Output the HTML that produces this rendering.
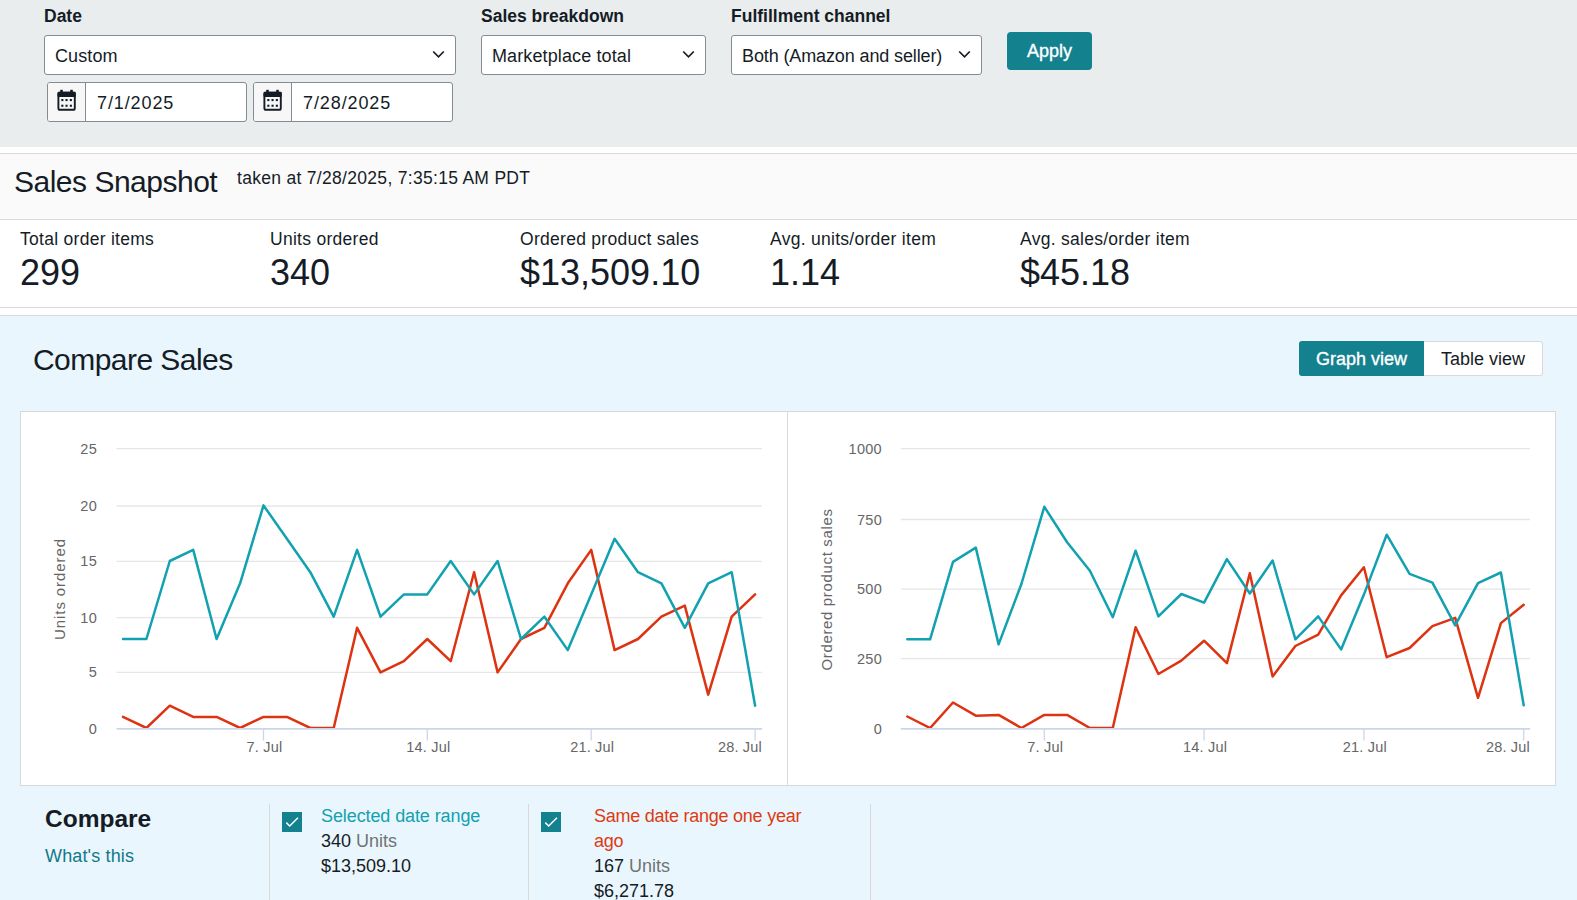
<!DOCTYPE html>
<html><head><meta charset="utf-8">
<style>
*{box-sizing:border-box;margin:0;padding:0}
html,body{width:1577px;height:900px;overflow:hidden;background:#fff}
body{font-family:"Liberation Sans",sans-serif;color:#151c26;position:relative}
.abs{position:absolute;white-space:nowrap}
#filters{position:absolute;left:0;top:0;width:1577px;height:147px;background:#eaeded}
.lbl{position:absolute;font-weight:bold;font-size:17.5px;color:#151c26;line-height:20px}
.sel{position:absolute;height:40px;background:#fff;border:1px solid #858b92;border-radius:3px}
.sel span{position:absolute;left:10px;top:9.5px;font-size:18px;line-height:20px;color:#151c26;letter-spacing:0.12px}
.chev{position:absolute;top:14px;width:13px;height:9px}
.dinp{position:absolute;top:82px;height:40px;width:200px;background:#fff;border:1px solid #858b92;border-radius:3px;overflow:hidden}
.dinp .ic{position:absolute;left:0;top:0;width:38px;height:38px;background:#f7f7f7;border-right:1px solid #858b92}
.dinp span{position:absolute;left:49px;top:10px;font-size:18px;line-height:20px;color:#151c26;letter-spacing:0.9px}
#apply{position:absolute;left:1007px;top:32px;width:85px;height:38px;background:#14818f;border-radius:4px;color:#fff;font-size:18px;line-height:38px;text-align:center;-webkit-text-stroke:0.35px #fff}
#snaphdr{position:absolute;left:0;top:153px;width:1577px;height:67px;background:#fafafa;border-top:1px solid #d9d9d9;border-bottom:1px solid #d9d9d9}
#metrics{position:absolute;left:0;top:220px;width:1577px;height:88px;border-bottom:1px solid #d9d9d9;background:#fff}
.mlab{position:absolute;top:9px;font-size:17.5px;line-height:20px;color:#151c26;letter-spacing:0.28px}
.mval{position:absolute;top:33px;font-size:36px;line-height:40px;color:#151c26}
#compare{position:absolute;left:0;top:315px;width:1577px;height:585px;background:#eaf6fd;border-top:1px solid #d9d9d9}
#toggle{position:absolute;left:1299px;top:341px;width:244px;height:35px}
#toggle .on{position:absolute;left:0;top:0;width:125px;height:35px;background:#14818f;color:#fff;font-size:18px;line-height:37px;text-align:center;border-radius:3px 0 0 3px;-webkit-text-stroke:0.35px #fff}
#toggle .off{position:absolute;left:125px;top:0;width:119px;height:35px;background:#fff;border:1px solid #d9d9d9;border-left:none;border-radius:0 3px 3px 0;color:#151c26;font-size:18px;line-height:35px;text-align:center}
#charts{position:absolute;left:20px;top:411px;width:1536px;height:375px;background:#fff;border:1px solid #d9d9d9}
#charts .div{position:absolute;left:766px;top:0;width:1px;height:373px;background:#d9d9d9}
.vdiv{position:absolute;top:804px;width:1px;height:96px;background:#d9d9d9}
.cb{position:absolute;top:812px;width:20px;height:20px;background:#14818f}
.leg{position:absolute;top:804px;font-size:18px;line-height:25px;color:#151c26;white-space:nowrap}
.gr{color:#6f7373}
.yl{font-size:14.5px;fill:#666;letter-spacing:0.3px}
.xl{font-size:14.5px;fill:#666;letter-spacing:0.2px}
.yt{font-size:15px;fill:#666;letter-spacing:0.9px}
</style></head>
<body>
<div id="filters">
  <div class="lbl" style="left:44px;top:6px">Date</div>
  <div class="sel" style="left:44px;top:35px;width:412px"><span>Custom</span>
    <svg class="chev" style="left:387px" viewBox="0 0 13 9"><path d="M1.2 1.5 L6.5 6.8 L11.8 1.5" fill="none" stroke="#151c26" stroke-width="1.7"/></svg></div>
  <div class="dinp" style="left:47px"><div class="ic"></div><span>7/1/2025</span></div>
  <div class="dinp" style="left:253px"><div class="ic"></div><span>7/28/2025</span></div>
  <div class="lbl" style="left:481px;top:6px">Sales breakdown</div>
  <div class="sel" style="left:481px;top:35px;width:225px"><span>Marketplace total</span>
    <svg class="chev" style="left:200px" viewBox="0 0 13 9"><path d="M1.2 1.5 L6.5 6.8 L11.8 1.5" fill="none" stroke="#151c26" stroke-width="1.7"/></svg></div>
  <div class="lbl" style="left:731px;top:6px">Fulfillment channel</div>
  <div class="sel" style="left:731px;top:35px;width:251px"><span style="letter-spacing:-0.12px">Both (Amazon and seller)</span>
    <svg class="chev" style="left:226px" viewBox="0 0 13 9"><path d="M1.2 1.5 L6.5 6.8 L11.8 1.5" fill="none" stroke="#151c26" stroke-width="1.7"/></svg></div>
  <div id="apply">Apply</div>
</div>

<div id="snaphdr">
  <div class="abs" style="left:14px;top:10px;font-size:30px;line-height:36px;letter-spacing:-0.5px">Sales Snapshot</div>
  <div class="abs" style="left:237px;top:14px;font-size:17.5px;line-height:20px;letter-spacing:0.3px">taken at 7/28/2025, 7:35:15 AM PDT</div>
</div>

<div id="metrics">
  <div class="mlab" style="left:20px">Total order items</div>
  <div class="mval" style="left:20px">299</div>
  <div class="mlab" style="left:270px">Units ordered</div>
  <div class="mval" style="left:270px">340</div>
  <div class="mlab" style="left:520px">Ordered product sales</div>
  <div class="mval" style="left:520px">$13,509.10</div>
  <div class="mlab" style="left:770px">Avg. units/order item</div>
  <div class="mval" style="left:770px">1.14</div>
  <div class="mlab" style="left:1020px">Avg. sales/order item</div>
  <div class="mval" style="left:1020px">$45.18</div>
</div>

<div id="compare"></div>
<div class="abs" style="left:33px;top:342px;font-size:30px;line-height:36px;letter-spacing:-0.55px">Compare Sales</div>
<div id="toggle"><div class="on">Graph view</div><div class="off">Table view</div></div>

<div id="charts"><div class="div"></div></div>

<!--CHART--><svg id="chartsvg" width="1577" height="900" viewBox="0 0 1577 900" style="position:absolute;left:0;top:0">
<clipPath id="clip123"><rect x="106.5" y="400" width="665.5" height="328.05"/></clipPath>
<line x1="116.5" y1="728.9" x2="762" y2="728.9" stroke="#ccd6eb" stroke-width="1.7"/>
<text x="97" y="733.7" text-anchor="end" class="yl">0</text>
<line x1="116.5" y1="672.4" x2="762" y2="672.4" stroke="#e6e6e6" stroke-width="1.3"/>
<text x="97" y="677.4" text-anchor="end" class="yl">5</text>
<line x1="116.5" y1="617.6" x2="762" y2="617.6" stroke="#e6e6e6" stroke-width="1.3"/>
<text x="97" y="622.6" text-anchor="end" class="yl">10</text>
<line x1="116.5" y1="561.4" x2="762" y2="561.4" stroke="#e6e6e6" stroke-width="1.3"/>
<text x="97" y="566.4" text-anchor="end" class="yl">15</text>
<line x1="116.5" y1="506.0" x2="762" y2="506.0" stroke="#e6e6e6" stroke-width="1.3"/>
<text x="97" y="511.0" text-anchor="end" class="yl">20</text>
<line x1="116.5" y1="448.7" x2="762" y2="448.7" stroke="#e6e6e6" stroke-width="1.3"/>
<text x="97" y="453.7" text-anchor="end" class="yl">25</text>
<line x1="263.5" y1="728.0" x2="263.5" y2="740.6" stroke="#ccd6eb" stroke-width="1.3"/>
<text x="264.5" y="752.0" text-anchor="middle" class="xl">7. Jul</text>
<line x1="427.3" y1="728.0" x2="427.3" y2="740.6" stroke="#ccd6eb" stroke-width="1.3"/>
<text x="428.3" y="752.0" text-anchor="middle" class="xl">14. Jul</text>
<line x1="591.2" y1="728.0" x2="591.2" y2="740.6" stroke="#ccd6eb" stroke-width="1.3"/>
<text x="592.2" y="752.0" text-anchor="middle" class="xl">21. Jul</text>
<line x1="755.1" y1="728.0" x2="755.1" y2="740.6" stroke="#ccd6eb" stroke-width="1.3"/>
<text x="762" y="752.0" text-anchor="end" class="xl">28. Jul</text>
<text x="64.5" y="589" text-anchor="middle" class="yt" style="letter-spacing:0.9px" transform="rotate(-90 64.5 589)">Units ordered</text>
<polyline clip-path="url(#clip123)" points="123.0,716.9 146.4,728.0 169.8,705.7 193.2,716.9 216.6,716.9 240.1,728.0 263.5,716.9 286.9,716.9 310.3,728.0 333.7,728.0 357.1,627.8 380.5,672.4 403.9,661.2 427.3,639.0 450.7,661.2 474.1,572.2 497.6,672.4 521.0,639.0 544.4,627.8 567.8,583.3 591.2,549.9 614.6,650.1 638.0,639.0 661.4,616.7 684.8,605.6 708.2,694.6 731.7,616.7 755.1,594.4" fill="none" stroke="#dd3311" stroke-width="2.5" stroke-linejoin="round" stroke-linecap="round"/>
<polyline clip-path="url(#clip123)" points="123.0,639.0 146.4,639.0 169.8,561.0 193.2,549.9 216.6,639.0 240.1,583.3 263.5,505.4 286.9,538.8 310.3,572.2 333.7,616.7 357.1,549.9 380.5,616.7 403.9,594.4 427.3,594.4 450.7,561.0 474.1,594.4 497.6,561.0 521.0,639.0 544.4,616.7 567.8,650.1 591.2,594.4 614.6,538.8 638.0,572.2 661.4,583.3 684.8,627.8 708.2,583.3 731.7,572.2 755.1,705.7" fill="none" stroke="#12a1b0" stroke-width="2.5" stroke-linejoin="round" stroke-linecap="round"/>
<clipPath id="clip907"><rect x="890.8" y="400" width="649.2" height="328.05"/></clipPath>
<line x1="900.8" y1="728.9" x2="1530" y2="728.9" stroke="#ccd6eb" stroke-width="1.7"/>
<text x="882" y="733.6" text-anchor="end" class="yl">0</text>
<line x1="900.8" y1="658.6" x2="1530" y2="658.6" stroke="#e6e6e6" stroke-width="1.3"/>
<text x="882" y="663.6" text-anchor="end" class="yl">250</text>
<line x1="900.8" y1="589.2" x2="1530" y2="589.2" stroke="#e6e6e6" stroke-width="1.3"/>
<text x="882" y="594.2" text-anchor="end" class="yl">500</text>
<line x1="900.8" y1="519.5" x2="1530" y2="519.5" stroke="#e6e6e6" stroke-width="1.3"/>
<text x="882" y="524.5" text-anchor="end" class="yl">750</text>
<line x1="900.8" y1="448.7" x2="1530" y2="448.7" stroke="#e6e6e6" stroke-width="1.3"/>
<text x="882" y="453.7" text-anchor="end" class="yl">1000</text>
<line x1="1044.3" y1="728.0" x2="1044.3" y2="740.6" stroke="#ccd6eb" stroke-width="1.3"/>
<text x="1045.3" y="752.0" text-anchor="middle" class="xl">7. Jul</text>
<line x1="1204.1" y1="728.0" x2="1204.1" y2="740.6" stroke="#ccd6eb" stroke-width="1.3"/>
<text x="1205.1" y="752.0" text-anchor="middle" class="xl">14. Jul</text>
<line x1="1363.9" y1="728.0" x2="1363.9" y2="740.6" stroke="#ccd6eb" stroke-width="1.3"/>
<text x="1364.9" y="752.0" text-anchor="middle" class="xl">21. Jul</text>
<line x1="1523.7" y1="728.0" x2="1523.7" y2="740.6" stroke="#ccd6eb" stroke-width="1.3"/>
<text x="1530" y="752.0" text-anchor="end" class="xl">28. Jul</text>
<text x="832" y="589.5" text-anchor="middle" class="yt" style="letter-spacing:0.65px" transform="rotate(-90 832 589.5)">Ordered product sales</text>
<polyline clip-path="url(#clip907)" points="907.3,716.5 930.1,728.0 953.0,702.5 975.8,715.7 998.6,714.9 1021.4,728.0 1044.3,714.9 1067.1,714.9 1089.9,728.0 1112.8,728.0 1135.6,627.3 1158.4,674.0 1181.3,660.6 1204.1,640.7 1226.9,663.1 1249.8,573.3 1272.6,676.5 1295.4,646.0 1318.2,634.6 1341.1,595.4 1363.9,567.2 1386.7,657.2 1409.6,648.0 1432.4,626.2 1455.2,617.8 1478.0,697.8 1500.9,623.1 1523.7,604.7" fill="none" stroke="#dd3311" stroke-width="2.5" stroke-linejoin="round" stroke-linecap="round"/>
<polyline clip-path="url(#clip907)" points="907.3,639.3 930.1,639.3 953.0,561.9 975.8,547.6 998.6,644.4 1021.4,584.0 1044.3,506.8 1067.1,542.3 1089.9,570.8 1112.8,617.2 1135.6,550.7 1158.4,616.4 1181.3,594.0 1204.1,602.7 1226.9,559.1 1249.8,593.5 1272.6,560.5 1295.4,639.3 1318.2,616.4 1341.1,649.4 1363.9,594.6 1386.7,534.7 1409.6,573.9 1432.4,582.6 1455.2,625.4 1478.0,583.1 1500.9,572.5 1523.7,705.3" fill="none" stroke="#12a1b0" stroke-width="2.5" stroke-linejoin="round" stroke-linecap="round"/>
</svg><!--/CHART-->
<div class="abs" style="left:45px;top:805px;font-size:24.5px;font-weight:bold;line-height:28px">Compare</div>
<div class="abs" style="left:45px;top:845px;font-size:18px;line-height:22px;color:#117989;letter-spacing:0.15px">What's this</div>
<div class="vdiv" style="left:269px"></div>
<div class="vdiv" style="left:528px"></div>
<div class="vdiv" style="left:870px"></div>
<div class="cb" style="left:282px"></div>
<div class="cb" style="left:541px"></div>
<div class="leg" style="left:321px"><span style="color:#12a1b0;letter-spacing:-0.1px">Selected date range</span><br>340 <span class="gr">Units</span><br>$13,509.10</div>
<div class="leg" style="left:594px"><span style="color:#dd3b12;letter-spacing:-0.25px">Same date range one year<br>ago</span><br>167 <span class="gr">Units</span><br>$6,271.78</div>
<svg id="icons" width="1577" height="900" style="position:absolute;left:0;top:0"><g transform="translate(0,0)" fill="#151c26">
<rect x="58.4" y="92.6" width="16.4" height="17.2" rx="1.6" fill="none" stroke="#151c26" stroke-width="1.9"/>
<rect x="57.5" y="91.7" width="18.3" height="5.2" rx="1.2"/>
<rect x="60.2" y="89.8" width="2.6" height="3"/><rect x="70.2" y="89.8" width="2.6" height="3"/>
<rect x="61.3" y="99" width="2.1" height="2.1"/><rect x="65.5" y="99" width="2.1" height="2.1"/><rect x="69.8" y="99" width="2.1" height="2.1"/>
<rect x="61.3" y="104.7" width="2.1" height="2.1"/><rect x="65.5" y="104.7" width="2.1" height="2.1"/><rect x="69.8" y="104.7" width="2.1" height="2.1"/>
</g><g transform="translate(206,0)" fill="#151c26">
<rect x="58.4" y="92.6" width="16.4" height="17.2" rx="1.6" fill="none" stroke="#151c26" stroke-width="1.9"/>
<rect x="57.5" y="91.7" width="18.3" height="5.2" rx="1.2"/>
<rect x="60.2" y="89.8" width="2.6" height="3"/><rect x="70.2" y="89.8" width="2.6" height="3"/>
<rect x="61.3" y="99" width="2.1" height="2.1"/><rect x="65.5" y="99" width="2.1" height="2.1"/><rect x="69.8" y="99" width="2.1" height="2.1"/>
<rect x="61.3" y="104.7" width="2.1" height="2.1"/><rect x="65.5" y="104.7" width="2.1" height="2.1"/><rect x="69.8" y="104.7" width="2.1" height="2.1"/>
</g><path transform="translate(0,0)" d="M286.3 822.6 L289.7 826 L298 817.7" fill="none" stroke="#fff" stroke-width="1.5"/><path transform="translate(259,0)" d="M286.3 822.6 L289.7 826 L298 817.7" fill="none" stroke="#fff" stroke-width="1.5"/></svg>
</body></html>
